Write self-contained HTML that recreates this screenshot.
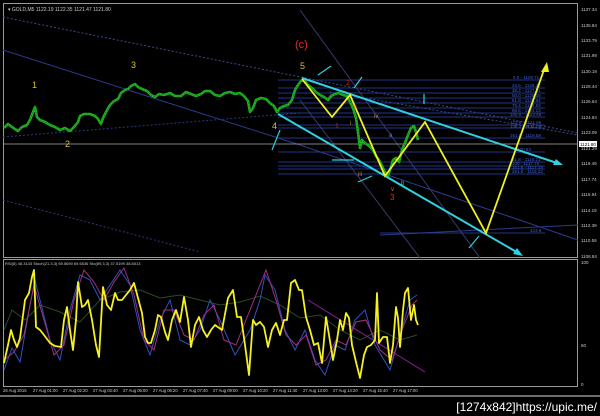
<!DOCTYPE html>
<html><head><style>
html,body{margin:0;padding:0;background:#000;width:600px;height:416px;overflow:hidden}
svg{display:block}
text{font-family:"Liberation Sans",sans-serif}
</style></head><body>
<svg width="600" height="416" viewBox="0 0 600 416" xmlns="http://www.w3.org/2000/svg">
<rect width="600" height="416" fill="#000"/>
<rect x="3.5" y="3.5" width="574" height="254" fill="none" stroke="#9a9a9a" stroke-width="1"/>
<rect x="3.5" y="259.5" width="574" height="127" fill="none" stroke="#9a9a9a" stroke-width="1"/>
<line x1="0" y1="396" x2="600" y2="396" stroke="#ddd" stroke-width="1"/>
<text x="8" y="11" fill="#ccc" font-size="5">▾ GOLD,M5  1122.19  1122.35  1121.47  1121.80</text>
<line x1="3" y1="17" x2="578" y2="133" stroke="#3a4a8a" stroke-width="1" stroke-dasharray="2,2"/>
<line x1="3" y1="50" x2="300" y2="145" stroke="#2a3a8a" stroke-width="1"/>
<line x1="3" y1="137" x2="300" y2="113" stroke="#2a3a7a" stroke-width="1" stroke-dasharray="2,2"/>
<line x1="3" y1="200" x2="200" y2="252" stroke="#2a3a7a" stroke-width="1" stroke-dasharray="2,2"/>
<line x1="300" y1="10" x2="480" y2="258" stroke="#3a3a6a" stroke-width="1"/>
<line x1="300" y1="100" x2="420" y2="258" stroke="#3a3a6a" stroke-width="1"/>
<line x1="300" y1="145" x2="578" y2="240" stroke="#2a3a8a" stroke-width="1"/>
<line x1="380" y1="235" x2="578" y2="225" stroke="#2a3a8a" stroke-width="1"/>
<line x1="330" y1="92" x2="578" y2="135" stroke="#3a4a8a" stroke-width="1" stroke-dasharray="2,2"/>
<line x1="3" y1="144" x2="578" y2="144" stroke="#aaa" stroke-width="0.7"/>
<g stroke="#2a44b0" stroke-width="0.8">
<line x1="278" y1="80" x2="545" y2="80"/><line x1="278" y1="88" x2="545" y2="88"/>
<line x1="278" y1="93" x2="545" y2="93"/><line x1="278" y1="98" x2="545" y2="98"/>
<line x1="278" y1="103" x2="545" y2="103"/><line x1="278" y1="108" x2="545" y2="108"/>
<line x1="278" y1="113" x2="545" y2="113"/><line x1="278" y1="117" x2="545" y2="117"/>
<line x1="278" y1="125" x2="545" y2="125"/><line x1="278" y1="128" x2="545" y2="128"/>
<line x1="278" y1="138" x2="545" y2="138"/><line x1="278" y1="152" x2="545" y2="152"/>
<line x1="278" y1="162" x2="545" y2="162"/><line x1="278" y1="166" x2="545" y2="166"/>
<line x1="278" y1="169" x2="545" y2="169"/><line x1="278" y1="174" x2="545" y2="174"/>
<line x1="380" y1="233" x2="545" y2="233"/>
</g>
<g fill="#4060d0" font-size="4.5">
<text x="513" y="79">0.0 - 1129.71</text><text x="512" y="87">23.6 - 1128.24</text>
<text x="512" y="92">38.2 - 1127.31</text><text x="512" y="97">50.0 - 1126.58</text>
<text x="512" y="102">61.8 - 1125.84</text><text x="512" y="107">76.4 - 1124.93</text>
<text x="512" y="112">88.6 - 1124.13</text><text x="510" y="116">100.0 - 1123.45</text>
<text x="510" y="124">123.6 - 1121.96</text><text x="510" y="128">138.2 - 1121.06</text>
<text x="510" y="137">161.8 - 1119.58</text><text x="515" y="151">1120.83</text>
<text x="512" y="161">61.8 - 1118.21</text><text x="512" y="165">100 - 1117.75</text>
<text x="512" y="169">161.8 - 1117.19</text><text x="512" y="173">261.8 - 1116.22</text>
<text x="530" y="232">423.6</text>
</g>
<polyline fill="none" stroke="#1fb01f" stroke-width="2.6" stroke-linejoin="round" points="4,128 8,124 12,127 18,131 22,127 27,125 30,120 33,112 35,107 37,117 40,120 45,122 50,125 55,127 60,130 65,128 70,131 74,127 78,122 80,116 84,114 90,114 95,116 98,119 101,124 103,118 106,112 110,105 114,101 118,99 121,93 125,90 128,89 131,86 135,84 138,87 142,89 147,91 151,95 155,97 159,94 164,95 170,93 175,96 181,96 186,92 191,94 196,96 201,94 205,91 210,91 215,95 220,96 225,93 230,92 235,94 240,93 244,96 248,101 250,112 253,108 256,100 261,98 266,99 270,103 274,106 277,112 280,108 284,106 288,105 292,100 295,90 298,85 301,81 304,80 308,85 312,88 316,92 320,95 324,97 328,100 331,96 335,94 339,93 343,95 347,96 350,102 353,108 356,118 358,132 360,148 362,140 365,143 369,146 373,150 376,156 379,160 382,166 385,172 388,176 391,167 393,160 396,158 399,162 402,150 405,143 408,135 411,128 414,126 416,132 418,140"/>
<polyline fill="none" stroke="#000" stroke-width="0.6" stroke-dasharray="0.8,2.2" opacity="0.6" points="4,128 8,124 12,127 18,131 22,127 27,125 30,120 33,112 35,107 37,117 40,120 45,122 50,125 55,127 60,130 65,128 70,131 74,127 78,122 80,116 84,114 90,114 95,116 98,119 101,124 103,118 106,112 110,105 114,101 118,99 121,93 125,90 128,89 131,86 135,84 138,87 142,89 147,91 151,95 155,97 159,94 164,95 170,93 175,96 181,96 186,92 191,94 196,96 201,94 205,91 210,91 215,95 220,96 225,93 230,92 235,94 240,93 244,96 248,101 250,112 253,108 256,100 261,98 266,99 270,103 274,106 277,112 280,108 284,106 288,105 292,100 295,90 298,85 301,81 304,80 308,85 312,88 316,92 320,95 324,97 328,100 331,96 335,94 339,93 343,95 347,96 350,102 353,108 356,118 358,132 360,148 362,140 365,143 369,146 373,150 376,156 379,160 382,166 385,172 388,176 391,167 393,160 396,158 399,162 402,150 405,143 408,135 411,128 414,126 416,132 418,140"/>
<g stroke="#30d0e0" stroke-width="2" fill="#30d0e0">
<line x1="302" y1="78" x2="560" y2="164"/>
<polygon points="563,165 553,165 556,159" stroke="none"/>
<line x1="278" y1="114" x2="520" y2="254"/>
<polygon points="523,256 513,254 517,248" stroke="none"/>
<line x1="318" y1="75" x2="331" y2="66" stroke-width="1.2"/>
<line x1="354" y1="88" x2="362" y2="77" stroke-width="1.2"/>
<line x1="424" y1="94" x2="424" y2="104" stroke-width="1.2"/>
<line x1="332" y1="160" x2="354" y2="160" stroke-width="1.2"/>
<line x1="358" y1="182" x2="372" y2="176" stroke-width="1.2"/>
<line x1="272" y1="150" x2="280" y2="130" stroke-width="1.2"/>
<line x1="469" y1="248" x2="479" y2="236" stroke-width="1.2"/>
</g>
<polyline fill="none" stroke="#f0f020" stroke-width="1.8" points="302,79 332,117 350,95 385,176 425,122 486,233 545,67"/>
<polygon points="547,62 541,72 549,72" fill="#f0f020"/>
<g font-family="Liberation Serif" font-size="9">
<text x="32" y="88" fill="#d8c030">1</text><text x="65" y="147" fill="#d8c030">2</text>
<text x="131" y="68" fill="#d8c030">3</text><text x="272" y="129" fill="#d8c030">4</text>
<text x="300" y="69" fill="#d8c030">5</text>
<text x="295" y="48" fill="#e03020" font-size="11">(c)</text>
<text x="346" y="85" fill="#c02020" font-size="7">2</text>
<text x="335" y="128" fill="#c02020" font-size="7">1</text>
<text x="390" y="200" fill="#e03020" font-size="8">3</text>
<text x="354" y="109" fill="#c08030" font-size="6">ii</text>
<text x="350" y="125" fill="#c08030" font-size="6">i</text>
<text x="374" y="118" fill="#c08030" font-size="6">iv</text>
<text x="358" y="176" fill="#c08030" font-size="6">iii</text>
<text x="391" y="191" fill="#c08030" font-size="6">v</text>
<text x="389" y="137" fill="#6080d0" font-size="6">a</text>
<text x="401" y="185" fill="#40c0c0" font-size="6">b</text>
</g>
<g fill="#ccc" font-size="4.5">
<text x="581" y="11">1137.34</text><text x="581" y="27">1135.84</text><text x="581" y="42">1133.79</text>
<text x="581" y="57">1131.99</text><text x="581" y="73">1130.19</text><text x="581" y="88">1128.44</text>
<text x="581" y="103">1126.64</text><text x="581" y="119">1124.84</text><text x="581" y="134">1123.09</text>
<text x="581" y="150">1121.29</text><text x="581" y="165">1119.49</text><text x="581" y="181">1117.74</text>
<text x="581" y="196">1115.94</text><text x="581" y="212">1114.19</text><text x="581" y="227">1112.39</text>
<text x="581" y="242">1110.59</text><text x="581" y="258">1108.84</text>
<text x="581" y="264">100</text><text x="581" y="347">50</text><text x="581" y="386">0</text>
</g>
<rect x="579" y="141" width="18" height="6" fill="#fff"/>
<text x="580" y="146" fill="#000" font-size="4.5">1121.80</text>
<text x="5" y="265" fill="#ccc" font-size="4">RSI(8) 48.3143  Stoch(21,3,3) 69.5690 69.6536  Sto(89,3,3) 37.5199 38.6513</text>
<polyline fill="none" stroke="#2a4a2a" stroke-width="1" points="4,330 12,310 25,320 40,305 60,312 80,322 100,300 120,292 140,290 160,298 180,295 200,300 220,305 240,302 260,296 280,305 300,318 320,315 340,330 360,340 380,330 400,340 417,335"/>
<polyline fill="none" stroke="#3050c0" stroke-width="1" points="4,370 12,348 20,362 30,305 35,280 40,300 50,340 60,360 70,310 80,275 90,280 100,300 110,285 120,270 130,285 140,330 150,355 160,320 170,300 180,340 190,345 200,330 210,300 220,320 235,355 250,330 260,300 265,275 275,290 285,330 295,350 305,330 315,360 325,375 335,345 345,350 355,320 365,310 375,345 390,370 400,335 410,300 417,295"/>
<polyline fill="none" stroke="#a03080" stroke-width="1" points="4,360 14,352 24,335 34,285 44,320 54,355 64,345 74,300 84,270 94,282 104,300 114,282 124,268 134,295 144,340 154,350 164,310 174,310 184,335 194,340 204,315 214,305 224,340 236,345 246,320 258,290 266,270 276,300 286,335 296,345 306,335 316,365 326,360 336,340 346,345 356,322 366,320 380,350 392,360 402,330 412,305 417,300"/>
<line x1="308" y1="300" x2="425" y2="372" stroke="#9020a0" stroke-width="1"/>
<polyline fill="none" stroke="#f5f020" stroke-width="1.8" stroke-linejoin="round" points="4,363 8,345 11,330 14,340 17,347 20,338 25,300 29,293 32,277 34,270 36,327 40,330 44,335 50,343 55,346 61,347 64,320 67,307 70,330 73,350 76,320 78,282 82,307 85,305 88,300 92,320 96,345 99,357 103,287 107,305 111,310 115,293 118,300 122,300 126,295 130,290 134,283 138,298 142,313 145,337 148,343 151,343 155,330 158,315 161,317 165,332 168,340 172,320 176,310 180,322 184,297 188,320 191,347 195,325 199,317 203,330 207,337 211,330 215,325 222,330 228,298 233,290 237,317 241,317 245,345 249,375 253,320 256,325 260,322 264,327 268,347 272,330 276,323 280,335 284,320 287,320 291,283 295,280 299,290 302,290 306,317 310,330 314,345 318,343 322,363 326,317 329,335 333,360 337,340 340,320 343,330 346,313 349,318 352,345 356,362 360,378 364,355 367,347 371,345 375,340 377,293 379,343 383,337 387,337 390,363 393,345 396,307 398,318 400,347 403,310 405,293 408,288 411,320 414,305 416,320 418,325"/>
<g fill="#ccc" font-size="4.2">
<text x="3" y="392">26 Aug 2015</text><text x="33" y="392">27 Aug 01:00</text><text x="63" y="392">27 Aug 02:20</text>
<text x="93" y="392">27 Aug 03:40</text><text x="123" y="392">27 Aug 05:00</text><text x="153" y="392">27 Aug 06:20</text>
<text x="183" y="392">27 Aug 07:40</text><text x="213" y="392">27 Aug 09:00</text><text x="243" y="392">27 Aug 10:20</text>
<text x="273" y="392">27 Aug 11:40</text><text x="303" y="392">27 Aug 13:00</text><text x="333" y="392">27 Aug 14:20</text>
<text x="363" y="392">27 Aug 15:40</text><text x="393" y="392">27 Aug 17:00</text>
</g>
<text x="597" y="411" fill="#fff" font-size="12" text-anchor="end" font-family="Liberation Mono">[1274x842]https://upic.me/</text>
</svg>
</body></html>
